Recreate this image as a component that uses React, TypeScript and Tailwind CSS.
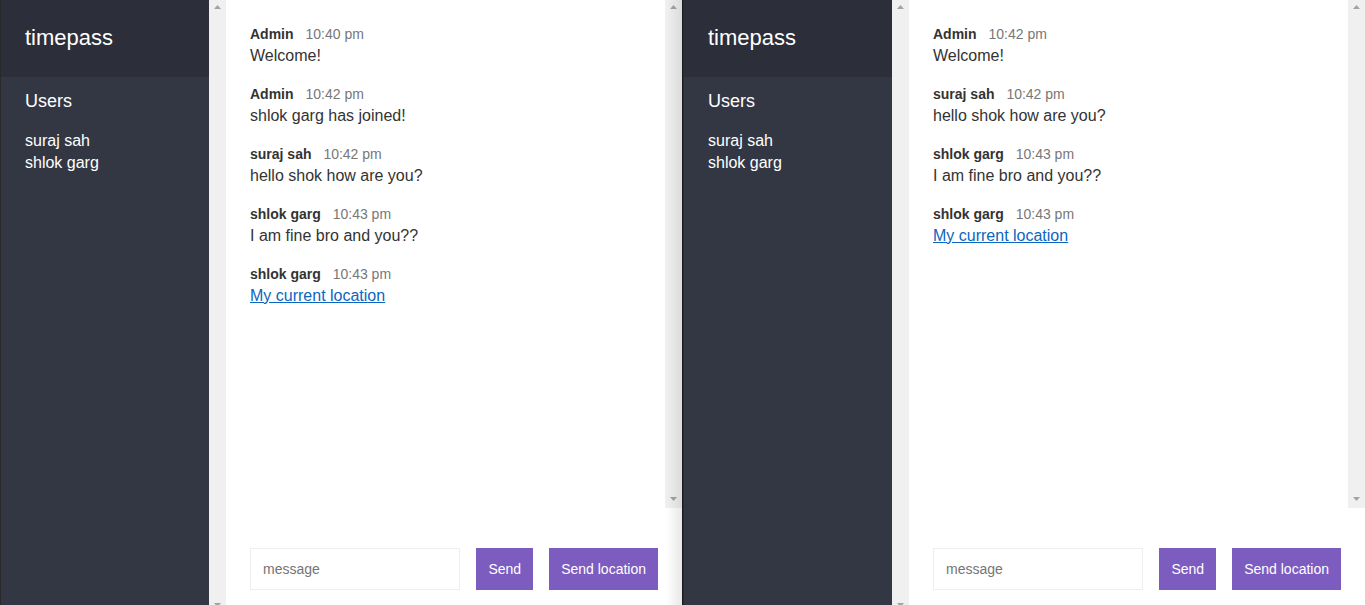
import React from "react";

const font = { fontFamily: '"Liberation Sans", Arial, Helvetica, sans-serif' };

type Msg = { name: string; time: string; text: string; link?: boolean };

const left: Msg[] = [
  { name: "Admin", time: "10:40 pm", text: "Welcome!" },
  { name: "Admin", time: "10:42 pm", text: "shlok garg has joined!" },
  { name: "suraj sah", time: "10:42 pm", text: "hello shok how are you?" },
  { name: "shlok garg", time: "10:43 pm", text: "I am fine bro and you??" },
  { name: "shlok garg", time: "10:43 pm", text: "My current location", link: true },
];

const right: Msg[] = [
  { name: "Admin", time: "10:42 pm", text: "Welcome!" },
  { name: "suraj sah", time: "10:42 pm", text: "hello shok how are you?" },
  { name: "shlok garg", time: "10:43 pm", text: "I am fine bro and you??" },
  { name: "shlok garg", time: "10:43 pm", text: "My current location", link: true },
];

function Up() {
  return (
    <svg width="7" height="4" viewBox="0 0 7 4" className="block">
      <polygon points="3.5,0 7,4 0,4" fill="#a3a3a3" />
    </svg>
  );
}
function Down() {
  return (
    <svg width="7" height="4" viewBox="0 0 7 4" className="block">
      <polygon points="0,0 7,0 3.5,4" fill="#a3a3a3" />
    </svg>
  );
}

function Scrollbar() {
  return (
    <div className="w-[17px] h-full bg-[#f0f0f0] flex flex-col items-center justify-between pt-[5px] pb-[7px] shrink-0">
      <Up />
      <Down />
    </div>
  );
}

function Window({ msgs }: { msgs: Msg[] }) {
  return (
    <div className="relative flex w-[682px] h-[614px] shrink-0 border-l border-[#2a2a2e]">
      {/* sidebar */}
      <div className="flex w-[225px] h-full bg-[#333744] text-white shrink-0">
        <div className="flex-1 flex flex-col">
          <div className="h-[77px] bg-[#2c2f3a] px-6 pt-6 text-[22px] leading-[28px]">timepass</div>
          <div className="px-6 pt-[13px] text-[18px] leading-[23px]">Users</div>
          <ul className="px-6 mt-[17px] text-base leading-[22px]">
            <li>suraj sah</li>
            <li>shlok garg</li>
          </ul>
        </div>
        <Scrollbar />
      </div>
      {/* chat */}
      <div className="flex flex-col w-[456px] h-full bg-white">
        <div className="flex h-[508px] shrink-0">
          <div className="flex-1 pt-[23px] pl-6 text-[#333]">
            {msgs.map((m, i) => (
              <div key={i} className="mb-4">
                <p className="leading-[22px] text-sm">
                  <span className="font-bold mr-2">{m.name}</span>{" "}
                  <span className="text-[#777]">{m.time}</span>
                </p>
                <p className="leading-[22px] text-base">
                  {m.link ? (
                    <a className="text-[#0b66c2] underline">{m.text}</a>
                  ) : (
                    m.text
                  )}
                </p>
              </div>
            ))}
          </div>
          <Scrollbar />
        </div>
        <div className="flex mt-4 p-6 pr-6">
          <input
            placeholder="message"
            className="flex-1 min-w-0 h-[42px] border border-[#eeeeee] px-3 mr-4 text-sm outline-none placeholder:text-[#757575]"
            style={font}
          />
          <button className="h-[42px] bg-[#7c5cbf] text-white text-sm px-3" style={font}>
            Send
          </button>
          <button className="h-[42px] bg-[#7c5cbf] text-white text-sm px-3 ml-4" style={font}>
            Send location
          </button>
        </div>
      </div>
    </div>
  );
}

export default function App() {
  return (
    <div className="relative w-[1365px] h-[605px] overflow-hidden flex bg-white" style={font}>
      <Window msgs={left} />
      <div className="w-px h-full bg-[#1c1c1c] shrink-0" />
      <Window msgs={right} />
      <div className="pointer-events-none absolute top-0 left-[666px] w-[16px] h-full bg-gradient-to-r from-transparent to-[rgba(0,0,0,0.09)]" />
    </div>
  );
}
